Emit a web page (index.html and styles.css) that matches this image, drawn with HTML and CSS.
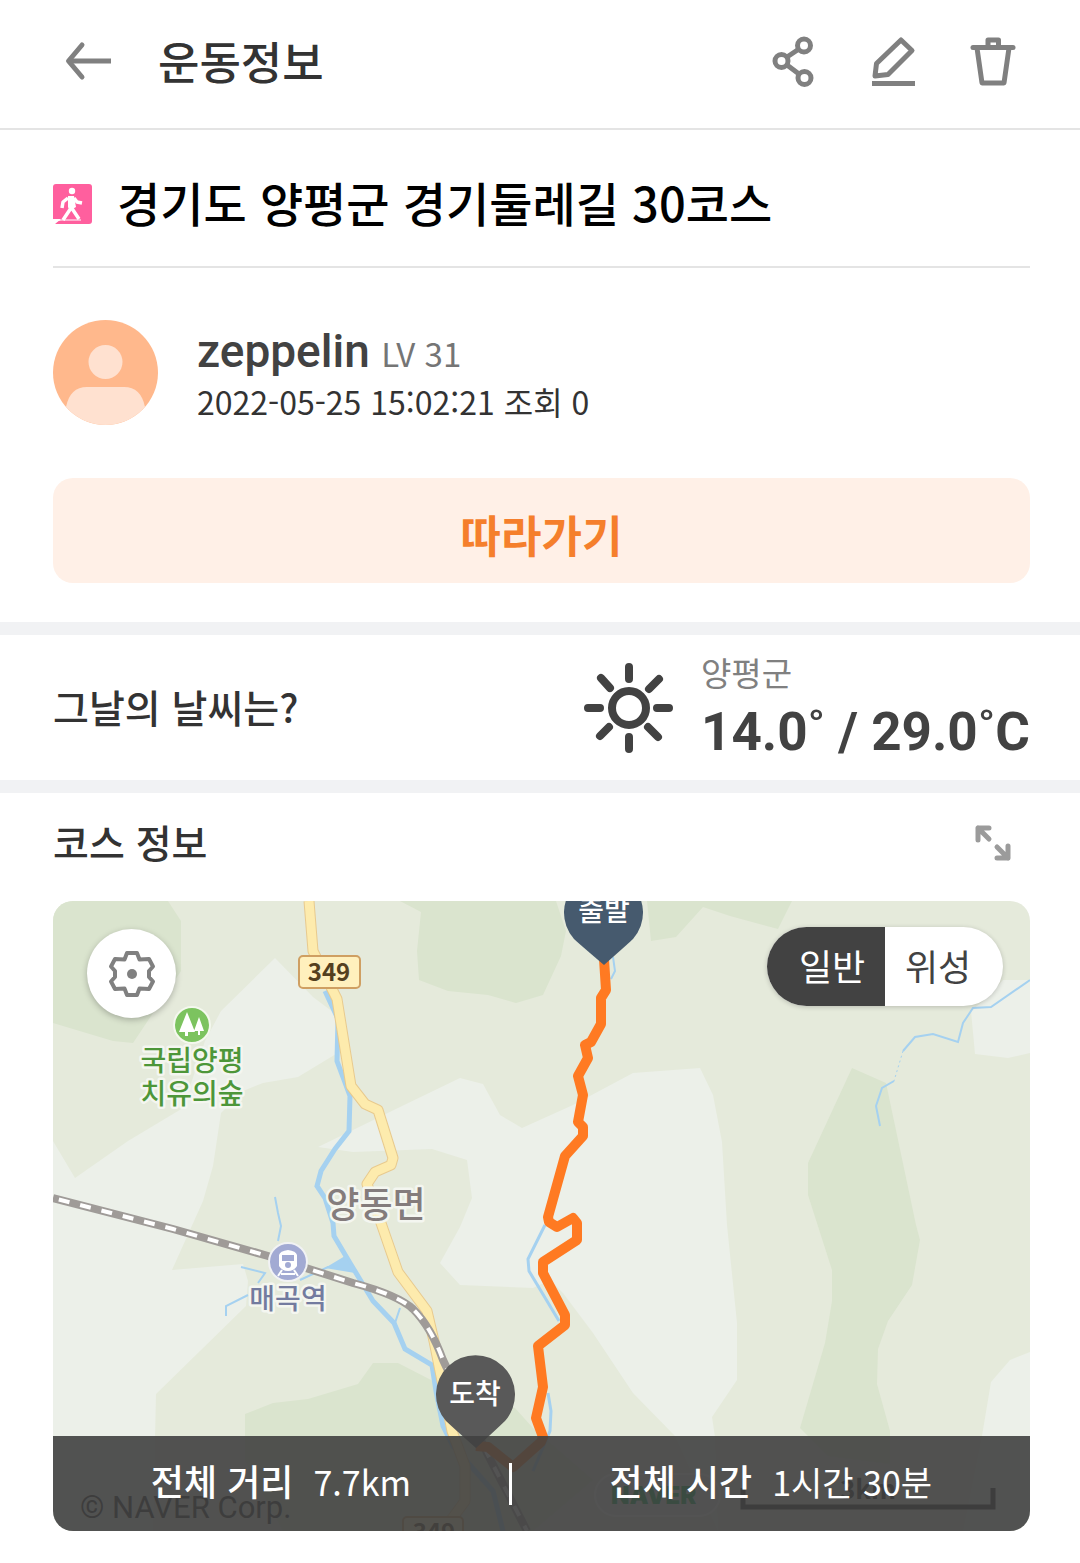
FILE: index.html
```html
<!DOCTYPE html>
<html lang="ko">
<head>
    <meta charset="UTF-8">
    <meta name="viewport" content="width=device-width, initial-scale=1.0">
    <title>운동정보</title>
    <link rel="stylesheet" href="styles.css">
</head>
<body>
    <header class="header">
        <button class="icon-btn" aria-label="뒤로">
            <svg width="50" height="50" viewBox="0 0 50 50" fill="none" stroke="#808080" stroke-width="5">
                <path d="M47 25H5"/>
                <path d="M18 9L4.500 25L18 41" stroke-linecap="round" stroke-linejoin="round"/>
            </svg>
        </button>
        <h1>운동정보</h1>
        <div class="header-actions">
            <button class="icon-btn" aria-label="공유">
                <svg width="50" height="50" viewBox="0 0 50 50" fill="none" stroke="#808080" stroke-width="5">
                    <circle cx="13.500" cy="25" r="6.500"/>
                    <circle cx="36" cy="9.500" r="6.500"/>
                    <circle cx="36.500" cy="42" r="6.500"/>
                    <path d="M19 21L31 13M19 29L31 38"/>
                </svg>
            </button>
            <button class="icon-btn" aria-label="수정">
                <svg width="50" height="50" viewBox="0 0 50 50" fill="none" stroke="#808080" stroke-width="5">
                    <path d="M33 4L44 14.500L20 38.500L7 40L8.500 27.500Z" stroke-linejoin="round"/>
                    <path d="M4 47.500H47"/>
                </svg>
            </button>
            <button class="icon-btn" aria-label="삭제">
                <svg width="50" height="50" viewBox="0 0 50 50" fill="none" stroke="#808080" stroke-width="5" stroke-linejoin="round">
                    <path d="M5 11.500H45" stroke-linecap="round"/>
                    <path d="M20 11V4H30.500V11"/>
                    <path d="M9 12L14 47H36L41 12"/>
                </svg>
            </button>
        </div>
    </header>

    <main>
        <section class="info">
            <div class="course-title">
                <svg width="40" height="42" viewBox="0 0 40 42">
                    <rect y="1" width="39" height="40" rx="3" fill="#ff5f9e"/>
                    <path d="M0 36H8L2 41H0Z" fill="#fff"/>
                    <circle cx="19" cy="8" r="3.200" fill="#fff"/>
                    <path d="M18 15L17 26M18 25L10 37M18 24L26 36M15 15L10 19L9 25M21 15L24 19L29 20" fill="none" stroke="#fff" stroke-width="3.500" stroke-linejoin="round"/>
                    <path d="M15 13H21L23 24L18 27L15 24Z" fill="#fff"/>
                    <path d="M3 38L8 37H28" fill="none" stroke="#fff" stroke-width="1"/>
                </svg>
                <h2>경기도 양평군 경기둘레길 30코스</h2>
            </div>

            <div class="user">
                <svg class="avatar" viewBox="0 0 105 105">
                    <circle cx="52.500" cy="52.500" r="52.500" fill="#ffb88c"/>
                    <circle cx="52.500" cy="42" r="17" fill="#ffe1d0"/>
                    <path d="M13 87Q17 67 34 67H71Q88 67 92 87A52.500 52.500 0 0 1 13 87Z" fill="#ffe1d0"/>
                </svg>
                <div class="user-text">
                    <p class="user-name">zeppelin <span>LV 31</span></p>
                    <p class="user-date">2022-05-25 15:02:21 조회 0</p>
                </div>
            </div>

            <button class="follow-btn">따라가기</button>
        </section>

        <section class="weather">
            <h3>그날의 날씨는?</h3>
            <svg width="92" height="92" viewBox="0 0 92 92" fill="none" stroke="#424242" stroke-width="8" stroke-linecap="round">
                <circle cx="46" cy="46" r="17"/>
                <path d="M46 5V17M46 75V87M5 46H17M74 46H86M18 16L27 26M76 17L66 27M17 74L26 65M75 75L65 65"/>
            </svg>
            <div>
                <p class="weather-place">양평군</p>
                <p class="weather-temp">14.0˚ / 29.0˚C</p>
            </div>
        </section>

        <section class="course">
            <div class="course-header">
                <h3>코스 정보</h3>
                <button class="icon-btn" aria-label="지도 확대">
                    <svg width="50" height="50" viewBox="0 0 50 50" fill="none" stroke="#9b9b9b" stroke-width="5" stroke-linecap="round" stroke-linejoin="round">
                        <path d="M21 21L10 10M10 22V10H21M29 29L40 40M29 40H40V28"/>
                    </svg>
                </button>
            </div>

            <div class="map">
                <svg class="map-canvas" viewBox="0 0 977 630">
                    <rect width="977" height="630" fill="#e5eadb"/>

                    <!-- open land -->
                    <g fill="#ecf0e9">
                        <path d="M222 57L260 96L284 114L283 153L245 176L210 182L190 190L168 212L160 265L150 300L119 369L190 363L195 380L193 405L103 493L100 630H0V240L22 277L75 240L130 207L152 140L168 110Z"/>
                        <path d="M265 246L300 229L347 206L407 177L430 183L447 214L469 227L520 204L580 172L647 167L660 194L669 241L674 324L684 422V479L659 516L662 536L665 630L622 535L580 492L540 432L510 392L497 379L480 387L407 384L387 362L407 326L419 297L414 259L379 248L300 251Z"/>
                        <path d="M950 79H977V152L955 157L922 153L918 110L930 100Z"/>
                        <path d="M977 451L957 459L938 481L929 535L910 630H977Z"/>
                    </g>

                    <!-- forest -->
                    <g fill="#dae4ce">
                        <path d="M0 0H115L128 20V70L80 142L60 140L0 122Z"/>
                        <path d="M347 0L368 11L364 50L366 79L395 90L435 94L463 102L490 94L508 55L513 30L503 0Z"/>
                        <path d="M594 0L598 40L623 36L650 6L677 15L725 28L739 0Z"/>
                        <path d="M799 167L833 182L863 324L867 339L859 384L835 420L825 448L824 483L837 530V563L775 555L747 527L772 442L779 400V369L755 294V262Z"/>
                        <path d="M320 462L305 483L255 498L220 502L192 513V560L230 630H480L540 579L480 527L462 507L380 480L345 462Z"/>
                    </g>

                    <!-- water -->
                    <g fill="none" stroke="#a5d1f0" stroke-width="2">
                        <path d="M272 90L285 118L284 160L297 195L296 230L282 248L268 270L264 285L272 297L280 322L281 335L297 362L320 400L341 422L352 448L379 464L383 490L390 525L400 545L440 590L450 630" stroke-width="5"/>
                        <path d="M188 366L212 372L205 382M173 415V405L195 394M222 296L225 312L228 325L225 340M247 379L275 366L297 366M347 407L341 425"/>
                        <path d="M492 324L475 358L476 370L506 420M495 492L498 510L497 530L480 570" stroke-width="3"/>
                        <path d="M560 56L562 70L558 78"/>
                        <path d="M977 79L938 106L920 107L910 122L905 141L880 133L862 136L850 150M841 180L829 187L823 205L827 225"/>
                        <path d="M850 150L841 180" stroke-dasharray="2 3" stroke-width="1"/>
                    </g>
                    <path d="M272 367L292 355L302 372Z" fill="#a5d1f0"/>

                    <!-- road 349 -->
                    <path d="M256 0L260 50L284 98L298 185L312 203L325 209L340 257L338 264L322 271L314 283L328 322L345 371L374 410L381 440L388 475L399 530L412 565V600L390 630" fill="none" stroke="#e8ca8e" stroke-width="11" stroke-linejoin="round"/>
                    <path d="M256 0L260 50L284 98L298 185L312 203L325 209L340 257L338 264L322 271L314 283L328 322L345 371L374 410L381 440L388 475L399 530L412 565V600L390 630" fill="none" stroke="#fdebad" stroke-width="9" stroke-linejoin="round"/>

                    <!-- railway -->
                    <g fill="none">
                        <path d="M0 297L120 328L215 355L300 382Q345 394 360 408Q378 426 390 459L434 552L474 630" stroke="#9f9b98" stroke-width="8"/>
                        <path d="M0 297L120 328L215 355L300 382Q345 394 360 408Q378 426 390 459L434 552L474 630" stroke="#fff" stroke-width="4" stroke-dasharray="11 11" stroke-dashoffset="-6"/>
                    </g>

                    <g class="road-badge">
                        <rect x="246" y="55" width="61" height="32" rx="4"/>
                        <text x="276" y="80">349</text>
                        <rect x="350" y="616" width="60" height="32" rx="4"/>
                        <text x="381" y="640">349</text>
                    </g>

                    <circle cx="139" cy="124" r="18" fill="#7cc35f" stroke="#f4f8ee" stroke-width="2"/>
                    <path d="M134 111L142 131H135V135H132V131H126ZM146 116L151 130H147V134H145V130H141Z" fill="#fff"/>
                    <text class="label park" x="139" y="170">국립양평</text>
                    <text class="label park" x="139" y="203">치유의숲</text>

                    <text class="label town" x="323" y="317">양동면</text>

                    <circle cx="235" cy="361" r="19" fill="#a2aad3" stroke="#f1f2f4" stroke-width="2"/>
                    <path d="M226 354Q227 350 235 349Q243 350 244 354V365Q241 370 235 370Q229 370 226 365Z" fill="#fff"/>
                    <path d="M229 354H241V360H229Z" fill="#a2aad3"/>
                    <circle cx="235" cy="364" r="3" fill="#a2aad3"/>
                    <path d="M229 369L225 375M241 369L245 375M228 373H242" stroke="#fff" stroke-width="2"/>
                    <text class="label station" x="235" y="408">매곡역</text>

                    <text x="27" y="617" class="copyright">© NAVER Corp.</text>
                    <rect x="542" y="573" width="125" height="42" rx="21" fill="#e9ecea" stroke="#fff" stroke-width="2"/>
                    <text x="558" y="603" class="naver">NAVER</text>
                    <path d="M690 587V606H940V587" fill="none" stroke="#222" stroke-width="5"/>
                    <text x="815" y="598" class="scale">3km</text>

                    <!-- recorded route -->
                    <path d="M551 58L553 89L548 97V123L538 141L532 144L535 157L525 175L530 194L525 221L530 226V235L512 255L495 316L496 321L504 326L520 317L524 322V339L490 361V372L512 414V424L485 445L490 486L483 517L490 536L488 541L460 566L435 546L423 545" fill="none" stroke="#ff7a22" stroke-width="10" stroke-linejoin="round"/>

                    <path d="M521 38A39.500 39.500 0 1 1 580 38Q577 41 551 64Q524 41 521 38Z" fill="#465a6e"/>
                    <text class="pin" x="551" y="20">출발</text>
                    <path d="M393 520A39.500 39.500 0 1 1 452 520Q449 523 423 547Q396 523 393 520Z" fill="#595959"/>
                    <text class="pin" x="422" y="503">도착</text>
                </svg>

                <button class="map-settings" aria-label="지도 설정">
                    <svg width="48" height="48" viewBox="0 0 48 48">
                        <path d="M19 3H29L31.500 9.500L41 9L45 16.500L41 21V27L45 31.500L41 39L31.500 38.500L29 45H19L16.500 38.500L7 39L3 31.500L7 27V21L3 16.500L7 9L16.500 9.500Z" fill="none" stroke="#808080" stroke-width="4" stroke-linejoin="round"/>
                        <circle cx="24" cy="24" r="5" fill="#808080"/>
                    </svg>
                </button>

                <div class="map-type">
                    <button class="active">일반</button>
                    <button>위성</button>
                </div>

                <div class="map-summary">
                    <p><strong>전체 거리</strong>7.7km</p>
                    <span class="divider"></span>
                    <p><strong>전체 시간</strong>1시간 30분</p>
                </div>
            </div>
        </section>
    </main>
</body>
</html>
```

FILE: styles.css
```css
* {
    box-sizing: border-box;
}
body {
    margin: 0;
    background: #fff;
    color: #333;
    font-family: "Noto Sans CJK KR", sans-serif;
}
h1, h2, h3, p {
    margin: 0;
    font-weight: 500;
}
button {
    padding: 0;
    border: none;
    background: none;
    font-family: inherit;
    cursor: pointer;
}
svg {
    display: block;
    flex-shrink: 0;
}
.icon-btn svg {
    overflow: visible;
}

/* Header */
.header {
    display: flex;
    align-items: center;
    gap: 44px;
    height: 130px;
    padding: 0 62px 6px 64px;
    border-bottom: 2px solid #e4e4e4;
}
.header h1 {
    font-size: 45px;
    line-height: 60px;
}
.header-actions {
    display: flex;
    gap: 50px;
    margin-left: auto;
}

/* Title and user */
.info {
    padding: 0 50px 39px 53px;
}
.course-title {
    display: flex;
    align-items: center;
    gap: 24px;
    height: 138px;
    padding-top: 12px;
    border-bottom: 2px solid #e4e4e4;
}
.course-title h2 {
    padding-bottom: 4px;
    color: #000;
    font-size: 47px;
    line-height: 64px;
}
.user {
    display: flex;
    align-items: center;
    gap: 39px;
    margin: 52px 0 53px;
}
.avatar {
    width: 105px;
    height: 105px;
}
.user-text {
    padding-top: 4px;
}
.user-name {
    color: #424242;
    font-family: Roboto, sans-serif;
    font-size: 46px;
    line-height: 50px;
}
.user-name span {
    color: #757575;
    font-family: "Noto Sans CJK KR", sans-serif;
    font-size: 33px;
    font-weight: 400;
}
.user-date {
    font-size: 32px;
    font-weight: 400;
    line-height: 46px;
}
.follow-btn {
    width: 100%;
    height: 105px;
    padding-top: 6px;
    border-radius: 20px;
    background: #fff0e7;
    color: #f57f2c;
    font-size: 44px;
    font-weight: 700;
}

/* Weather */
.weather {
    display: flex;
    align-items: center;
    height: 171px;
    padding: 0 50px 0 53px;
    border-top: 13px solid #f1f2f4;
    border-bottom: 13px solid #f1f2f4;
}
.weather h3,
.course-header h3 {
    padding-bottom: 4px;
    font-size: 39px;
    line-height: 56px;
}
.weather svg {
    margin: 0 26px 0 auto;
}
.weather-place {
    color: #808080;
    font-size: 33px;
    font-weight: 400;
    line-height: 48px;
}
.weather-temp {
    color: #424242;
    font-family: Roboto, sans-serif;
    font-size: 53px;
    font-weight: 700;
    line-height: 72px;
}

/* Course map */
.course {
    padding: 0 50px 32px 53px;
}
.course-header {
    display: flex;
    align-items: center;
    justify-content: space-between;
    height: 108px;
    padding: 0 12px 8px 0;
}
.map {
    position: relative;
    overflow: hidden;
    border-radius: 20px;
}
.map-canvas {
    width: 100%;
    height: auto;
}
.map-canvas text {
    font-weight: 700;
    text-anchor: middle;
}
.map-canvas .label {
    font-weight: 500;
    stroke: #f4f6f0;
    stroke-width: 5px;
    stroke-linejoin: round;
    paint-order: stroke;
}
.map-canvas .park {
    fill: #4d9639;
    font-size: 28px;
}
.map-canvas .town {
    fill: #847c7c;
    font-size: 36px;
}
.map-canvas .station {
    fill: #737b9f;
    font-size: 28px;
}
.road-badge rect {
    fill: #fff0bd;
    stroke: #cf9f62;
    stroke-width: 2px;
}
.road-badge text {
    fill: #54401f;
    font-size: 24px;
}
.map-canvas .pin {
    fill: #fff;
    font-size: 28px;
    font-weight: 500;
}
.map-canvas .copyright {
    fill: #222;
    font-family: Roboto, sans-serif;
    font-size: 31px;
    font-weight: 400;
    text-anchor: start;
}
.map-canvas .naver {
    fill: #03a94d;
    font-family: Inter, sans-serif;
    font-size: 24px;
    font-weight: 900;
    text-anchor: start;
}
.map-canvas .scale {
    fill: #222;
    font-size: 26px;
}
.map-settings {
    position: absolute;
    top: 28px;
    left: 34px;
    display: flex;
    align-items: center;
    justify-content: center;
    width: 89px;
    height: 89px;
    border-radius: 50%;
    background: #fff;
    box-shadow: 0 2px 6px rgba(0,0,0,0.25);
}
.map-type {
    position: absolute;
    top: 26px;
    right: 27px;
    display: flex;
    overflow: hidden;
    border-radius: 40px;
    background: #fff;
    box-shadow: 0 1px 5px rgba(0,0,0,0.2);
}
.map-type button {
    width: 118px;
    height: 79px;
    padding: 0 12px 4px 0;
    color: #424242;
    font-size: 36px;
}
.map-type .active {
    padding: 0 0 4px 12px;
    background: #424242;
    color: #fff;
}
.map-summary {
    position: absolute;
    right: 0;
    bottom: 0;
    left: 0;
    display: flex;
    align-items: center;
    justify-content: space-evenly;
    height: 95px;
    background: rgba(64,64,64,0.9);
    color: #fff;
}
.map-summary p {
    padding-bottom: 6px;
    font-size: 34px;
    font-weight: 400;
    line-height: 56px;
}
.map-summary strong {
    margin-right: 20px;
    font-size: 36px;
    font-weight: 500;
}
.divider {
    width: 3px;
    height: 42px;
    background: #fff;
}
```
